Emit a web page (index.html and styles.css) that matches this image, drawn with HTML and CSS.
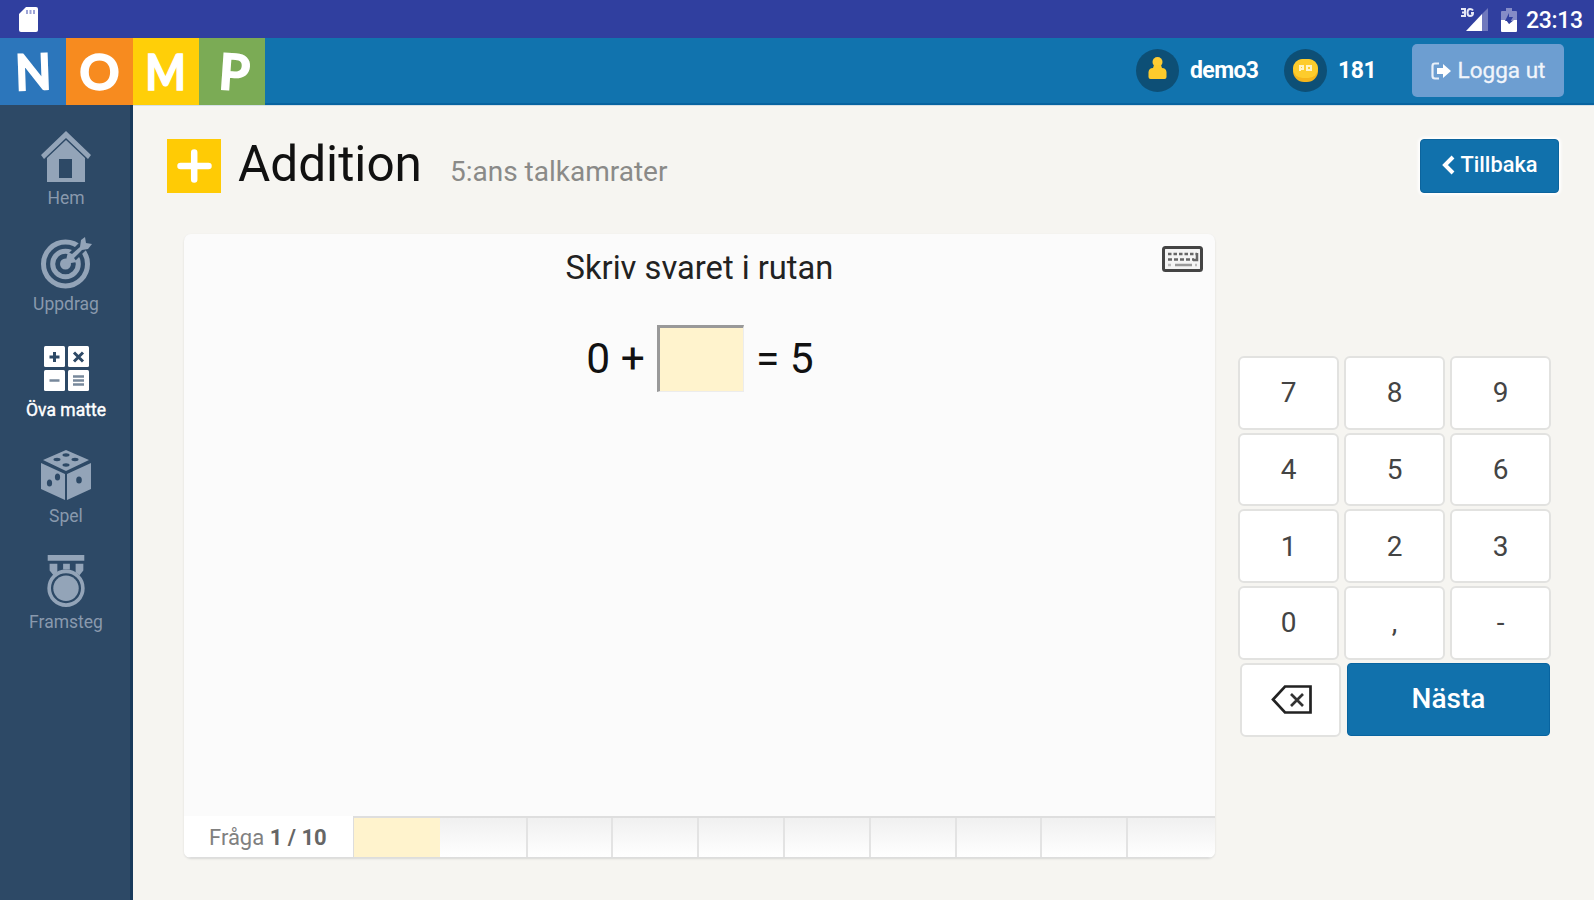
FILE: index.html
```html
<!DOCTYPE html>
<html lang="sv">
<head>
<meta charset="utf-8">
<title>Nomp – Addition</title>
<link rel="stylesheet" href="styles.css">
</head>
<body>
<div class="status">
  <svg class="sd" width="19" height="25" viewBox="0 0 19 25"><path d="M7 0h10q2 0 2 2v21q0 2-2 2H2q-2 0-2-2V7z" fill="#fff"/><path d="M8 3v4M11.500 3v4M15 3v4" stroke="#9da4d6" stroke-width="2"/></svg>
  <div class="status-right">
    <svg width="29" height="25" viewBox="0 0 29 25"><path d="M28 1v23h-6V7z" fill="#7079bd"/><path d="M6 24 22 7v17z" fill="#fff"/><path d="M1 2h4v7H1M2 5.500h3M13 3.500Q12 2 10 2 7.500 2 7.500 5.500T10 9q3 0 3-3h-2" fill="none" stroke="#e6e8f5" stroke-width="2"/></svg>
    <svg class="battery" width="16" height="24" viewBox="0 0 16 24"><path d="M5 0h6v3h4q1 0 1 1v9H0V4q0-1 1-1h4z" fill="#858cc7"/><path d="M0 12h5l3 4 5-4h3v11q0 1-1 1H1q-1 0-1-1z" fill="#fff"/><path d="m8 5-4 8h4v3l4-7H8z" fill="#303f9f"/></svg>
    <span class="clock">23:13</span>
  </div>
</div>
<header class="topbar">
  <div class="logo">
    <div class="tile blue"><span>N</span></div>
    <div class="tile orange"><span>O</span></div>
    <div class="tile yellow"><span>M</span></div>
    <div class="tile green"><span>P</span></div>
  </div>
  <div class="account">
    <svg width="43" height="43" viewBox="0 0 43 43"><circle cx="21.500" cy="21.500" r="21.500" fill="#0d4f76"/><circle cx="21.500" cy="13" r="5" fill="#fc3"/><path d="M18 16h7l1 3q4 0 4.500 4v5q0 2-2 2h-14q-2 0-2-2v-5q.5-4 4.500-4z" fill="#fdcb2c"/></svg>
    <span class="user">demo3</span>
    <svg width="43" height="43" viewBox="0 0 43 43"><circle cx="21.500" cy="21.500" r="21.500" fill="#0d4f76"/><rect x="9" y="10" width="25" height="23" rx="11" fill="#f5b51b"/><rect x="9" y="10" width="25" height="19" rx="9.500" fill="#fdcc2c"/><path d="M16 22v-5h3v3h-3M23 22v-5h4v4h-4" fill="none" stroke="#fff3c4" stroke-width="2"/></svg>
    <span class="coins">181</span>
    <div class="logout">
      <svg width="20" height="18" viewBox="0 0 20 18"><path d="M8 1.500H4Q1.500 1.500 1.500 4v10Q1.500 16.500 4 16.500h4" fill="none" stroke="#e9f0f9" stroke-width="2.200"/><path d="M6 6h6V2l8 7-8 7v-4H6z" fill="#fff"/></svg>
      <span>Logga ut</span>
    </div>
  </div>
</header>
<div class="body">
  <nav class="sidebar">
    <div class="item">
      <svg width="52" height="52" viewBox="0 0 52 52" fill="#93a4b8"><path d="M26 0 51 24l-3 4L26 7 4 28l-3-4z"/><path fill-rule="evenodd" d="M26 9 45 27v24H7V27zM19 28v19h13V28z"/></svg>
      <span>Hem</span>
    </div>
    <div class="item">
      <svg width="52" height="52" viewBox="0 0 52 52"><g fill="none" stroke="#93a4b8" stroke-width="5"><circle cx="25.500" cy="27" r="22"/><circle cx="25.500" cy="27" r="12.800"/></g><circle cx="25.500" cy="27" r="5.500" fill="#93a4b8"/><path d="M31 21 45 7" stroke="#2d4966" stroke-width="10"/><path d="m25 27 3-12 4 2 8-7 1-7 4-3 1 6 6 1-4 5-6 1-8 8 3 4z" fill="#93a4b8"/></svg>
      <span>Uppdrag</span>
    </div>
    <div class="item active">
      <svg width="52" height="52" viewBox="0 0 52 52"><g fill="#fff"><rect x="4" y="3" width="21" height="21" rx="1.500"/><rect x="28" y="3" width="21" height="21" rx="1.500"/><rect x="4" y="27" width="21" height="21" rx="1.500"/><rect x="28" y="27" width="21" height="21" rx="1.500"/></g><g stroke="#2d4966" stroke-width="3"><path d="M14.500 9v10M9.500 14h10M34 9.500l9 9M43 9.500l-9 9"/><path d="M9.500 37.500h10M33 33.500h11M33 37.500h11M33 41.500h11" stroke="#77889b" stroke-width="2.500"/></g></svg>
      <span>Öva matte</span>
    </div>
    <div class="item">
      <svg width="52" height="52" viewBox="0 0 52 52"><path d="M26 1 49 11 26 22 3 11zM1 14l24 11v26L1 40zM51 14 27 25v26l24-11z" fill="#93a4b8"/><g fill="#2d4966"><ellipse cx="26" cy="6" rx="3.500" ry="1.700"/><ellipse cx="17" cy="10.500" rx="3.500" ry="1.700"/><ellipse cx="35" cy="10.500" rx="3.500" ry="1.700"/><ellipse cx="26" cy="16" rx="3.500" ry="1.700"/><ellipse cx="17.500" cy="28" rx="2.600" ry="3.500"/><ellipse cx="9.500" cy="34" rx="2.600" ry="3.500"/><ellipse cx="39" cy="31" rx="2.800" ry="3.500"/></g></svg>
      <span>Spel</span>
    </div>
    <div class="item">
      <svg width="52" height="52" viewBox="0 0 52 54"><path d="M7 0h38v6H7zM9 9h8v9l-4 3-4-5zM36 9h8v7l-4 5-4-3zM23 9h7v6h-7z" fill="#93a4b8"/><circle cx="26" cy="34.500" r="17.500" fill="none" stroke="#93a4b8" stroke-width="3.800"/><circle cx="26" cy="34.500" r="13.200" fill="#93a4b8"/></svg>
      <span>Framsteg</span>
    </div>
  </nav>
  <main class="main">
    <div class="heading">
      <svg width="54" height="54" viewBox="0 0 54 54"><path d="M0 0h54v54H0z" fill="#ffcb05"/><path d="M27.200 13.500v27M13.500 27h28" stroke="#fff" stroke-width="6.500" stroke-linecap="round"/></svg>
      <h1>Addition</h1>
      <h2>5:ans talkamrater</h2>
      <div class="back">
        <svg width="14" height="20" viewBox="0 0 14 20"><path d="M12 2 4 10l8 8" fill="none" stroke="#fff" stroke-width="4"/></svg>
        <span>Tillbaka</span>
      </div>
    </div>
    <div class="work">
      <section class="panel">
        <div class="question">
          <svg class="kbd" width="41" height="26" viewBox="0 0 41 26"><rect x="1.500" y="1.500" width="38" height="23" rx="2" fill="#f4f4f4" stroke="#444" stroke-width="3"/><g stroke="#666" stroke-width="2.500" fill="none"><path d="M6 8h29" stroke-dasharray="3.500 2"/><path d="M6 13.500h26" stroke-dasharray="4 2"/><path d="M35 7v7h-4"/><path d="M13 19h17" stroke="#999"/><path d="M6 19h3M33 19h2" stroke="#bbb"/></g></svg>
          <p class="prompt">Skriv svaret i rutan</p>
          <div class="equation"><span>0 +</span><div class="answer"></div><span>= 5</span></div>
        </div>
        <footer class="progress">
          <div class="label">Fråga <b>1 / 10</b></div>
          <i class="now"></i><i></i><i></i><i></i><i></i><i></i><i></i><i></i><i></i><i></i>
        </footer>
      </section>
      <div class="keypad">
        <div class="keys">
          <div class="key">7</div><div class="key">8</div><div class="key">9</div>
          <div class="key">4</div><div class="key">5</div><div class="key">6</div>
          <div class="key">1</div><div class="key">2</div><div class="key">3</div>
          <div class="key">0</div><div class="key">,</div><div class="key">-</div>
        </div>
        <div class="actions">
          <div class="key erase"><svg width="41" height="29" viewBox="0 0 41 29"><path d="M14 1.500h25.500v26H14L2 14.500z" fill="none" stroke="#222" stroke-width="2.700"/><path d="m20 9 12 12M32 9 20 21" stroke="#333" stroke-width="2.700"/></svg></div>
          <div class="next">Nästa</div>
        </div>
      </div>
    </div>
  </main>
</div>
</body>
</html>
```

FILE: styles.css
```css
* { box-sizing: border-box; }
body { margin: 0; width: 1594px; height: 900px; overflow: hidden; display: flex; flex-direction: column; background: #f6f5f1; font-family: Roboto, "Noto Sans", sans-serif; color: #111; }
svg { display: block; flex: none; }
span { white-space: nowrap; }

.status { height: 38px; flex: none; background: #303f9f; display: flex; justify-content: space-between; align-items: flex-start; padding: 7px 11px 0 19px; color: #fff; }
.status-right { display: flex; align-items: flex-start; }
.battery { margin: 1px 9px 0 12px; }
.clock { font-size: 23px; font-weight: 500; line-height: 27px; width: 57px; letter-spacing: -.3px; }

.topbar { height: 67px; flex: none; background: #1173ae; border-bottom: 2px solid #0864a0; display: flex; justify-content: space-between; }
.logo { display: flex; height: 67px; }
.tile { width: 66.300px; height: 67px; display: flex; align-items: center; justify-content: center; color: #fff; font: bold 50px/67px Lato, sans-serif; -webkit-text-stroke: 1.500px #fff; }
.blue { background: #2c76bb; }
.orange { background: #f78b1f; }
.yellow { background: #ffcf08; }
.green { background: #7bab55; }
.blue span { transform: rotate(-2deg) scaleX(.94); }
.yellow span { transform: scaleX(.86); }
.green span { transform: translateX(2px) rotate(4deg); }
.account { display: flex; padding: 11px 30px 0 0; color: #fff; font-size: 23px; font-weight: 700; line-height: 43px; }
.user { width: 93px; flex: none; padding-left: 11px; margin-right: 12px; letter-spacing: -.6px; }
.coins { width: 85px; padding-left: 11px; flex: none; letter-spacing: -.5px; }
.logout { width: 152px; height: 53px; margin-top: -5px; border-radius: 5px; background: #6d9ed1; display: flex; align-items: center; justify-content: center; gap: 7px; font-weight: 400; font-size: 22.500px; color: #f1f5fb; -webkit-text-stroke: .3px #f1f5fb; }

.body { flex: 1; display: flex; min-height: 0; }
.sidebar { width: 133px; flex: none; background: #2d4966; border-right: 3px solid #183a5c; padding: 26px 0 0 2px; }
.item { height: 106px; display: flex; flex-direction: column; align-items: center; color: #8999ad; font-size: 17.500px; line-height: 22px; }
.item span { margin-top: 4px; }
.active { color: #fff; }
.active span { -webkit-text-stroke: .4px #fff; }

.main { flex: 1; border-top: 1px solid #d6e0e6; padding: 33px 34px 0 34px; }
.heading { display: flex; height: 54px; }
h1 { margin: 0 0 0 17px; font-size: 49.500px; font-weight: 400; line-height: 51px; width: 212px; }
h2 { margin: 0; font-size: 28px; font-weight: 400; line-height: 65px; color: #8a8a88; }
.back { margin: 0 1px 0 auto; width: 139px; height: 54px; border-radius: 4px; background: #1171ac; border: 1px solid #0c649d; box-shadow: 0 0 3px 2px #fff; color: #fff; display: flex; align-items: center; justify-content: center; gap: 5px; font-size: 21.800px; font-weight: 500; padding-bottom: 3px; }

.work { display: flex; align-items: flex-start; margin: 41px -8px 0 17px; }
.panel { width: 1031px; height: 624px; flex: none; display: flex; flex-direction: column; background: #fbfbfb; border-radius: 7px; overflow: hidden; box-shadow: 0 1px 2px #d8d8d6; }
.question { flex: 1; position: relative; display: flex; flex-direction: column; align-items: center; }
.kbd { position: absolute; right: 12px; top: 12px; }
.prompt { margin: 14px 0 0; font-size: 32.700px; line-height: 40px; color: #222; white-space: nowrap; transform: scaleX(1); letter-spacing: 0; }
.equation { display: flex; margin: 37px 0 0 1px; font-size: 42.500px; line-height: 67px; gap: 12px; }
.answer { width: 87px; height: 67px; background: #fff3cd; border: 1px solid #ececec; border-top: 3px solid #999; border-left: 3px solid #999; }
.progress { height: 42px; display: flex; border-top: 2px solid #dedede; border-bottom: 1px solid #ddd; }
.label { width: 170px; flex: none; margin-top: -2px; background: #fff; border-right: 1px solid #ddd; padding-left: 25px; font-size: 22px; line-height: 43px; color: #808080; }
.label b { color: #666; }
.progress i { flex: 0 0 85.800px; border-left: 2px solid #e3e3e3; background: linear-gradient(#f0f0f0, #fff); }
.progress i:last-child { flex: 1; }
.progress i.now, .progress i.now + i { border-left-width: 0; }
.progress i.now { background: #fff3cd; }

.keypad { margin: 122px 0 0 23px; width: 313px; flex: none; }
.keys { display: grid; grid-template-columns: repeat(3, 101px); grid-auto-rows: 73.700px; gap: 3px 5px; }
.key { border: 2px solid #e2e2e0; border-radius: 6px; background: #fff; display: flex; align-items: center; justify-content: center; font-size: 28px; color: #444; }
.actions { display: flex; gap: 6px; margin: 3px 0 0 2px; }
.erase { width: 101px; height: 74px; flex: none; padding: 0 0 0 2px; }
.next { width: 203px; height: 73px; border-radius: 4px; background: #1171ac; border: 1px solid #0864a0; color: #fff; font-size: 28px; font-weight: 500; line-height: 69px; text-align: center; }
```
